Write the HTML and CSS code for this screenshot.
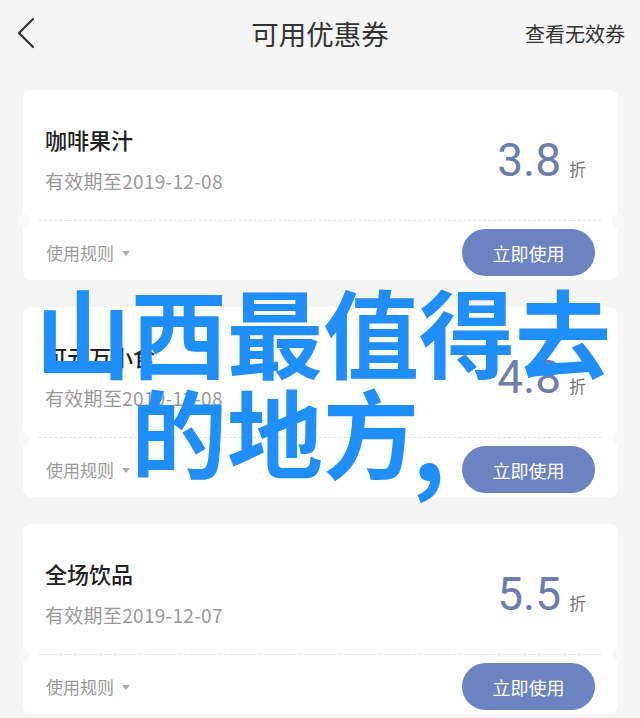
FILE: index.html
```html
<!DOCTYPE html>
<html lang="zh-CN">
<head>
<meta charset="utf-8">
<title>可用优惠券</title>
<link rel="stylesheet" href="styles.css">
</head>
<body>
<div class="page">
  <header class="topbar">
    <span class="back">
      <svg width="20" height="32" viewBox="0 0 20 32"><path d="M17 2 L3 16 L17 30" fill="none" stroke="#333" stroke-width="2.2" stroke-linecap="round" stroke-linejoin="round"/></svg>
    </span>
    <h1 class="title">可用优惠券</h1>
    <a class="invalid">查看无效券</a>
  </header>

  <main class="list">
    <section class="card">
      <div class="card-top">
        <div class="info">
          <div class="name">咖啡果汁</div>
          <div class="date">有效期至2019-12-08</div>
        </div>
        <div class="price"><span class="num">3.8</span><span class="unit">折</span></div>
      </div>
      <div class="card-bottom">
        <span class="rule">使用规则<span class="tri"></span></span>
        <button class="use">立即使用</button>
      </div>
    </section>

    <section class="card">
      <div class="card-top">
        <div class="info">
          <div class="name">可元万小食</div>
          <div class="date">有效期至2019-12-08</div>
        </div>
        <div class="price"><span class="num">4.8</span><span class="unit">折</span></div>
      </div>
      <div class="card-bottom">
        <span class="rule">使用规则<span class="tri"></span></span>
        <button class="use">立即使用</button>
      </div>
    </section>

    <section class="card">
      <div class="card-top">
        <div class="info">
          <div class="name">全场饮品</div>
          <div class="date">有效期至2019-12-07</div>
        </div>
        <div class="price"><span class="num">5.5</span><span class="unit">折</span></div>
      </div>
      <div class="card-bottom">
        <span class="rule">使用规则<span class="tri"></span></span>
        <button class="use">立即使用</button>
      </div>
    </section>
  </main>

  <div class="overlay">山西最值得去<br>的地方<span class="comma">,</span></div>
</div>
</body>
</html>
```

FILE: styles.css
```css
* { box-sizing: border-box; }
html, body {
  margin: 0;
  padding: 0;
  background: #f5f5f5;
}
body {
  font-family: "Noto Sans CJK SC", "Noto Sans", sans-serif;
  color: #333;
  width: 640px;
  height: 718px;
  overflow: hidden;
}
.page {
  position: relative;
  width: 640px;
  height: 718px;
}
.topbar {
  height: 66px;
  display: flex;
  align-items: center;
  justify-content: space-between;
  padding: 0 15px 0 16px;
  position: relative;
}
.back {
  display: flex;
  width: 24px;
  height: 32px;
  align-items: center;
}
.title {
  position: absolute;
  left: 0;
  right: 0;
  top: 0;
  margin: 0;
  line-height: 66px;
  text-align: center;
  font-size: 27.5px;
  font-weight: 400;
  color: #333;
  pointer-events: none;
}
.invalid {
  font-size: 20px;
  color: #333;
}
.list {
  padding: 24px 22px 0 23px;
  display: flex;
  flex-direction: column;
  gap: 27px;
}
.card {
  background: #fff;
  border-radius: 8px;
  height: 190px;
  position: relative;
  flex-shrink: 0;
}
.card::before, .card::after {
  content: "";
  position: absolute;
  top: 124px;
  width: 12px;
  height: 14px;
  border-radius: 50%;
  background: #f8f8f8;
}
.card::before { left: -6px; }
.card::after { right: -6px; }
.card-top {
  height: 131px;
  display: flex;
  justify-content: space-between;
  padding: 36px 15px 0 6px;
  border-bottom: 1px dashed #e4e4e4;
  margin: 0 17px 0 16px;
}
.name {
  font-size: 22px;
  line-height: 26px;
  font-weight: 500;
  color: #222;
}
.date {
  margin-top: 17px;
  font-size: 19px;
  line-height: 24px;
  letter-spacing: 0.3px;
  color: #999;
}
.price {
  display: flex;
  align-items: baseline;
  margin-top: 8px;
  color: #6b7eae;
}
.num {
  font-family: Roboto, "Noto Sans", sans-serif;
  font-size: 46px;
  line-height: 52px;
  color: #6b7eae;
}
.unit {
  font-size: 17px;
  color: #777;
  margin-left: 8px;
}
.card-bottom {
  height: 58px;
  display: flex;
  align-items: flex-start;
  justify-content: space-between;
  padding: 8px 23px 0 23px;
}
.rule {
  margin-top: 12px;
  font-size: 17px;
  line-height: 24px;
  color: #999;
  display: flex;
  align-items: center;
}
.tri {
  width: 0;
  height: 0;
  border-left: 4px solid transparent;
  border-right: 4px solid transparent;
  border-top: 5px solid #aaa;
  margin-left: 8px;
}
.use {
  width: 133px;
  height: 47px;
  border: none;
  border-radius: 24px;
  background: #6b83c0;
  color: #fff;
  font-family: "Noto Sans CJK SC", sans-serif;
  font-size: 18px;
  padding: 0;
}
.overlay {
  position: absolute;
  left: 0;
  right: 0;
  top: 280px;
  text-align: center;
  font-family: "Noto Sans CJK SC", sans-serif;
  font-weight: 700;
  font-size: 96px;
  line-height: 100px;
  color: #1f8ffd;
  padding-left: 6px;
}
.comma {
  display: inline-block;
  width: 1em;
  text-align: left;
  font-size: 1em;
  transform: translate(-7px, 3px) scale(1.08);
  transform-origin: left top;
}
```
